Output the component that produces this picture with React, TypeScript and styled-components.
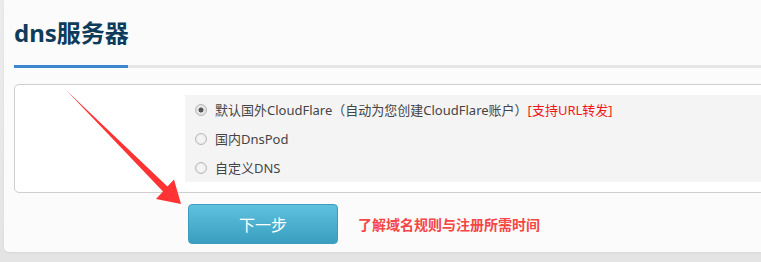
import styled, { createGlobalStyle } from 'styled-components';

const GlobalStyle = createGlobalStyle`
	html, body {
		margin: 0;
		padding: 0;
		background: linear-gradient(#ececec, #e4e4e4);
		font-family: 'Noto Sans', 'Noto Sans CJK SC', sans-serif;
	}
`;

const options = [
	{ id: 'cf', label: '默认国外CloudFlare（自动为您创建CloudFlare账户）', note: '[支持URL转发]', checked: true },
	{ id: 'dnspod', label: '国内DnsPod' },
	{ id: 'custom', label: '自定义DNS' },
];

function App() {
	return (
		<Root>
			<GlobalStyle />
			<Page>
				<Title>dns服务器</Title>
				<Underline>
					<span />
				</Underline>
				<OptionBox>
					<OptionPanel>
						{options.map((o) => (
							<OptionRow key={o.id}>
								<Radio type="radio" name="dns" defaultChecked={o.checked} />
								<span>{o.label}</span>
								{o.note && <Note>{o.note}</Note>}
							</OptionRow>
						))}
					</OptionPanel>
				</OptionBox>
				<Actions>
					<NextButton>下一步</NextButton>
					<HelpLink>了解域名规则与注册所需时间</HelpLink>
				</Actions>
			</Page>
			<Arrow viewBox="0 0 761 262" width={761} height={262}>
				<polygon
					points="66,90 167.5,186.5 174,179.5 181,204 156,199 163,191.5"
					fill="#ff3333"
				/>
			</Arrow>
		</Root>
	);
}

const Root = styled.div`
	position: relative;
	width: 761px;
	height: 262px;
	overflow: hidden;
`;

const Page = styled.div`
	margin-left: 4px;
	height: 252px;
	padding: 16px 0 0 10px;
	box-sizing: border-box;
	background: #fbfbfb;
	border-radius: 0 0 0 5px;
	box-shadow: 0 1px 3px rgba(0, 0, 0, 0.06);
`;

const Title = styled.h2`
	margin: 0;
	font-size: 24px;
	line-height: 34px;
	font-weight: bold;
	color: #0f3b5a;
	font-family: 'Noto Sans', 'Noto Sans CJK SC', sans-serif;
`;

const Underline = styled.div`
	margin-top: 15px;
	height: 3px;
	background: #e6e6e6;

	span {
		display: block;
		width: 114px;
		height: 3px;
		background: #3a87cf;
	}
`;

const OptionBox = styled.div`
	margin-top: 16px;
	margin-right: -10px;
	height: 109px;
	box-sizing: border-box;
	padding: 10px 0 0 170px;
	background: #fff;
	border: 1px solid #cfcfcf;
	border-radius: 5px;
`;

const OptionPanel = styled.div`
	background: #f4f4f4;
	height: 87px;
	padding-left: 10px;
	display: flex;
	flex-direction: column;
`;

const OptionRow = styled.label`
	display: flex;
	align-items: center;
	height: 29px;
	font-size: 13px;
	color: #444;
	white-space: nowrap;
`;

const Radio = styled.input`
	appearance: none;
	margin: 0 8px 0 0;
	width: 12px;
	height: 12px;
	border-radius: 50%;
	border: 1px solid #b9b9b9;
	background: radial-gradient(circle, #f4f4f4 40%, #dedede 100%);
	box-sizing: border-box;
	position: relative;

	&:checked {
		background: radial-gradient(circle, #555 0 2.2px, #e8e8e8 2.8px, #dadada 100%);
	}
`;

const Note = styled.span`
	color: #f21818;
`;

const Actions = styled.div`
	display: flex;
	align-items: center;
	margin: 11px 0 0 174px;
	gap: 20px;
`;

const NextButton = styled.button`
	width: 150px;
	height: 40px;
	border: 1px solid #3a9dbd;
	border-radius: 4px;
	background: linear-gradient(#5ec1de, #3a9ec0);
	color: #fff;
	font-size: 16px;
	font-family: 'Noto Sans CJK SC', sans-serif;
	cursor: pointer;
`;

const HelpLink = styled.a`
	font-size: 14px;
	font-weight: bold;
	color: #f64545;
	font-family: 'Noto Sans CJK SC', sans-serif;
	cursor: pointer;
`;

const Arrow = styled.svg`
	position: absolute;
	left: 0;
	top: 0;
	pointer-events: none;
`;

export default App;
